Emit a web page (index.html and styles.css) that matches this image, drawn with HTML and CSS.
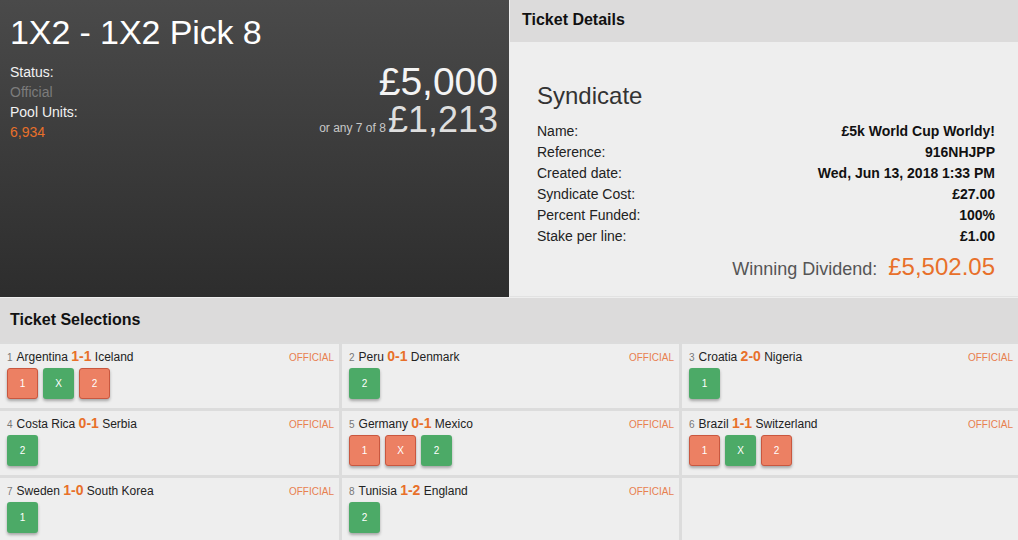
FILE: index.html
```html
<!DOCTYPE html>
<html>
<head>
<meta charset="utf-8">
<link rel="stylesheet" href="styles.css">
</head>
<body>
<div class="top">
  <div class="pool">
    <h1 class="pool-title">1X2 - 1X2 Pick 8</h1>
    <div class="pool-body">
      <div class="stats">
        <div class="stat-label">Status:</div>
        <div class="stat-muted">Official</div>
        <div class="stat-label">Pool Units:</div>
        <div class="stat-orange">6,934</div>
      </div>
      <div class="prizes">
        <div class="prize-main">£5,000</div>
        <div class="prize-alt"><span class="prize-note">or any 7 of 8</span><span class="prize-second">£1,213</span></div>
      </div>
    </div>
  </div>
  <div class="details">
    <div class="panel-head">Ticket Details</div>
    <div class="details-body">
      <div class="synd-title">Syndicate</div>
      <div class="row"><span class="lbl">Name:</span><span class="val">£5k World Cup Worldy!</span></div>
      <div class="row"><span class="lbl">Reference:</span><span class="val">916NHJPP</span></div>
      <div class="row"><span class="lbl">Created date:</span><span class="val">Wed, Jun 13, 2018 1:33 PM</span></div>
      <div class="row"><span class="lbl">Syndicate Cost:</span><span class="val">£27.00</span></div>
      <div class="row"><span class="lbl">Percent Funded:</span><span class="val">100%</span></div>
      <div class="row"><span class="lbl">Stake per line:</span><span class="val">£1.00</span></div>
      <div class="dividend"><span class="div-lbl">Winning Dividend:</span><span class="div-val">£5,502.05</span></div>
    </div>
  </div>
</div>
<div class="sel-head">Ticket Selections</div>
<div class="grid">
  <div class="cell">
    <div class="cell-head"><span class="match"><span class="num">1</span>Argentina <b class="score">1-1</b> Iceland</span><span class="status">OFFICIAL</span></div>
    <div class="picks"><span class="pick lose">1</span><span class="pick win">X</span><span class="pick lose">2</span></div>
  </div>
  <div class="cell">
    <div class="cell-head"><span class="match"><span class="num">2</span>Peru <b class="score">0-1</b> Denmark</span><span class="status">OFFICIAL</span></div>
    <div class="picks"><span class="pick win">2</span></div>
  </div>
  <div class="cell">
    <div class="cell-head"><span class="match"><span class="num">3</span>Croatia <b class="score">2-0</b> Nigeria</span><span class="status">OFFICIAL</span></div>
    <div class="picks"><span class="pick win">1</span></div>
  </div>
  <div class="cell">
    <div class="cell-head"><span class="match"><span class="num">4</span>Costa Rica <b class="score">0-1</b> Serbia</span><span class="status">OFFICIAL</span></div>
    <div class="picks"><span class="pick win">2</span></div>
  </div>
  <div class="cell">
    <div class="cell-head"><span class="match"><span class="num">5</span>Germany <b class="score">0-1</b> Mexico</span><span class="status">OFFICIAL</span></div>
    <div class="picks"><span class="pick lose">1</span><span class="pick lose">X</span><span class="pick win">2</span></div>
  </div>
  <div class="cell">
    <div class="cell-head"><span class="match"><span class="num">6</span>Brazil <b class="score">1-1</b> Switzerland</span><span class="status">OFFICIAL</span></div>
    <div class="picks"><span class="pick lose">1</span><span class="pick win">X</span><span class="pick lose">2</span></div>
  </div>
  <div class="cell">
    <div class="cell-head"><span class="match"><span class="num">7</span>Sweden <b class="score">1-0</b> South Korea</span><span class="status">OFFICIAL</span></div>
    <div class="picks"><span class="pick win">1</span></div>
  </div>
  <div class="cell">
    <div class="cell-head"><span class="match"><span class="num">8</span>Tunisia <b class="score">1-2</b> England</span><span class="status">OFFICIAL</span></div>
    <div class="picks"><span class="pick win">2</span></div>
  </div>
  <div class="cell"></div>
</div>
</body>
</html>
```

FILE: styles.css
```css
* { box-sizing: border-box; }
html, body { margin: 0; padding: 0; }
body {
  width: 1018px;
  height: 540px;
  overflow: hidden;
  background: #eeeeee;
  font-family: "Liberation Sans", Arial, sans-serif;
  color: #222;
}
.top {
  display: flex;
  height: 297px;
  margin-bottom: 1px;
}
.pool {
  width: 509px;
  background: linear-gradient(#4a4a4a, #2d2d2d);
  padding: 12px 11px 0 10px;
  color: #fff;
}
.pool-title {
  margin: 0;
  font-size: 34px;
  font-weight: normal;
  line-height: 40px;
  letter-spacing: -0.1px;
}
.pool-body {
  display: flex;
  justify-content: space-between;
  margin-top: 10px;
}
.stats {
  font-size: 14px;
  line-height: 20px;
}
.stat-label { color: #f2f2f2; }
.stat-muted { color: #7c7c7c; }
.stat-orange { color: #e8702a; }
.prizes {
  text-align: right;
  padding-top: 1px;
}
.prize-main {
  font-size: 39px;
  line-height: 38px;
  color: #f4f4f4;
}
.prize-alt {
  display: flex;
  align-items: baseline;
  justify-content: flex-end;
  line-height: 36px;
  height: 36px;
  margin-top: 3px;
}
.prize-note {
  font-size: 12px;
  color: #c8c8c8;
  margin-right: 2px;
}
.prize-second {
  font-size: 36px;
  line-height: 32px;
  color: #dedede;
}
.details {
  flex: 1;
  margin-left: 1px;
  display: flex;
  flex-direction: column;
  background: #eeeeee;
  border-bottom: 1px solid #e2e2e2;
}
.panel-head {
  height: 42px;
  background: #dcdbdb;
  padding: 0 12px;
  font-size: 16px;
  font-weight: bold;
  line-height: 39px;
  color: #111;
}
.details-body {
  padding: 38px 23px 0 27px;
}
.synd-title {
  font-size: 24px;
  color: #333;
  line-height: 32px;
  margin-bottom: 9px;
}
.row {
  display: flex;
  justify-content: space-between;
  align-items: baseline;
  line-height: 21px;
  height: 21px;
}
.lbl {
  font-size: 14px;
  color: #222;
}
.val {
  font-size: 14px;
  font-weight: bold;
  color: #111;
}
.dividend {
  display: flex;
  justify-content: flex-end;
  align-items: baseline;
  margin-top: 5px;
  line-height: 30px;
}
.div-lbl {
  font-size: 18px;
  color: #555;
  margin-right: 11px;
}
.div-val {
  font-size: 24px;
  color: #e8702a;
}
.sel-head {
  height: 44px;
  background: #dcdbdb;
  padding: 0 10px;
  font-size: 16px;
  font-weight: bold;
  line-height: 44px;
  color: #111;
}
.grid {
  display: grid;
  grid-template-columns: 339px 337px 1fr;
  grid-auto-rows: 64px;
  gap: 3px;
  padding-top: 2px;
  background: #dcdcdc;
}
.cell {
  background: #eeeeee;
  padding: 4px 5px 0 7px;
}
.cell-head {
  display: flex;
  justify-content: space-between;
  align-items: baseline;
  height: 20px;
}
.match {
  font-size: 12px;
  color: #222;
}
.num {
  font-size: 10px;
  color: #777;
  margin-right: 4px;
}
.score {
  font-size: 14px;
  color: #e8702a;
}
.status {
  font-size: 10px;
  color: #e8804f;
}
.picks {
  display: flex;
  gap: 5px;
}
.pick {
  width: 31px;
  height: 31px;
  border-radius: 3px;
  color: #fff;
  font-size: 10px;
  display: flex;
  align-items: center;
  justify-content: center;
  box-shadow: 0 2px 3px rgba(0, 0, 0, 0.3);
}
.pick.win {
  background: #4caa67;
}
.pick.lose {
  background: #ec8063;
  border: 1px solid #c9573f;
}
```
